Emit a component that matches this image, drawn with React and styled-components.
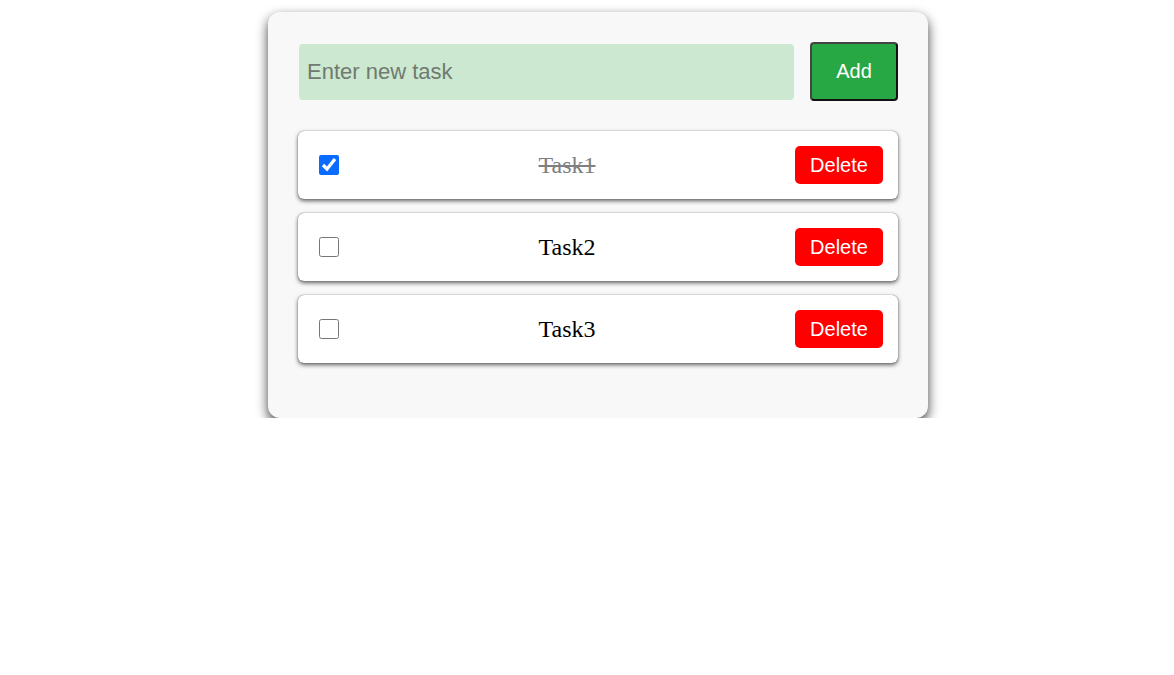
import React, { useState } from "react";
import styled, { createGlobalStyle } from "styled-components";

const Global = createGlobalStyle`
  body {
    margin: 0;
    background: #fff;
    font-family: "Liberation Serif", "Times New Roman", serif;
  }
`;

const Page = styled.div`
  display: flex;
  justify-content: center;
  padding: 12px 0 0 22px;
`;

const Card = styled.div`
  width: 660px;
  box-sizing: border-box;
  background: #f8f8f8;
  border-radius: 12px;
  padding: 30px 30px 35px;
  box-shadow: 0 5px 12px rgba(0, 0, 0, 0.75);
`;

const AddRow = styled.div`
  display: flex;
  align-items: center;
  gap: 16px;
  margin-bottom: 30px;
`;

const TaskInput = styled.input`
  flex: 1;
  height: 56px;
  margin: 1px 0 0 1px;
  box-sizing: border-box;
  border: none;
  border-radius: 4px;
  background: #cde8d0;
  padding: 0 8px;
  font-family: "Liberation Sans", Arial, sans-serif;
  font-size: 22px;
  color: #333;
  outline: none;
  &::placeholder {
    color: #6f7a70;
  }
`;

const AddButton = styled.button`
  width: 88px;
  height: 59px;
  box-sizing: border-box;
  background: #28a745;
  color: #fff;
  border: 2px solid #111;
  border-top-color: #444;
  border-left-color: #444;
  border-radius: 4px;
  font-family: "Liberation Sans", Arial, sans-serif;
  font-size: 20px;
  cursor: pointer;
`;

const List = styled.ul`
  list-style: none;
  margin: 0 0 20px;
  padding: 0;
  display: flex;
  flex-direction: column;
  gap: 14px;
`;

const Item = styled.li`
  display: flex;
  align-items: center;
  height: 68px;
  box-sizing: border-box;
  background: #fff;
  border-radius: 6px;
  padding: 0 15px 0 21px;
  box-shadow: 0 2px 4px rgba(0, 0, 0, 0.6), 0 0 1px rgba(0, 0, 0, 0.6);
`;

const Check = styled.input`
  width: 20px;
  height: 20px;
  margin: 0;
  accent-color: #0a6cff;
`;

const Label = styled.span`
  flex: 1;
  text-align: center;
  font-size: 24px;
  color: ${(p) => (p.$done ? "#808080" : "#000")};
  text-decoration: ${(p) => (p.$done ? "line-through" : "none")};
`;

const DeleteButton = styled.button`
  width: 88px;
  height: 38px;
  background: #ff0000;
  color: #fff;
  border: none;
  border-radius: 5px;
  font-family: "Liberation Sans", Arial, sans-serif;
  font-size: 20px;
  cursor: pointer;
`;

export default function App() {
  const [tasks, setTasks] = useState([
    { id: 1, text: "Task1", done: true },
    { id: 2, text: "Task2", done: false },
    { id: 3, text: "Task3", done: false },
  ]);
  const [text, setText] = useState("");

  const add = () => {
    if (!text.trim()) return;
    setTasks([...tasks, { id: Date.now(), text, done: false }]);
    setText("");
  };

  return (
    <Page>
      <Global />
      <Card>
        <AddRow>
          <TaskInput
            placeholder="Enter new task"
            value={text}
            onChange={(e) => setText(e.target.value)}
          />
          <AddButton onClick={add}>Add</AddButton>
        </AddRow>
        <List>
          {tasks.map((t) => (
            <Item key={t.id}>
              <Check
                type="checkbox"
                checked={t.done}
                onChange={() =>
                  setTasks(tasks.map((x) => (x.id === t.id ? { ...x, done: !x.done } : x)))
                }
              />
              <Label $done={t.done}>{t.text}</Label>
              <DeleteButton onClick={() => setTasks(tasks.filter((x) => x.id !== t.id))}>
                Delete
              </DeleteButton>
            </Item>
          ))}
        </List>
      </Card>
    </Page>
  );
}
